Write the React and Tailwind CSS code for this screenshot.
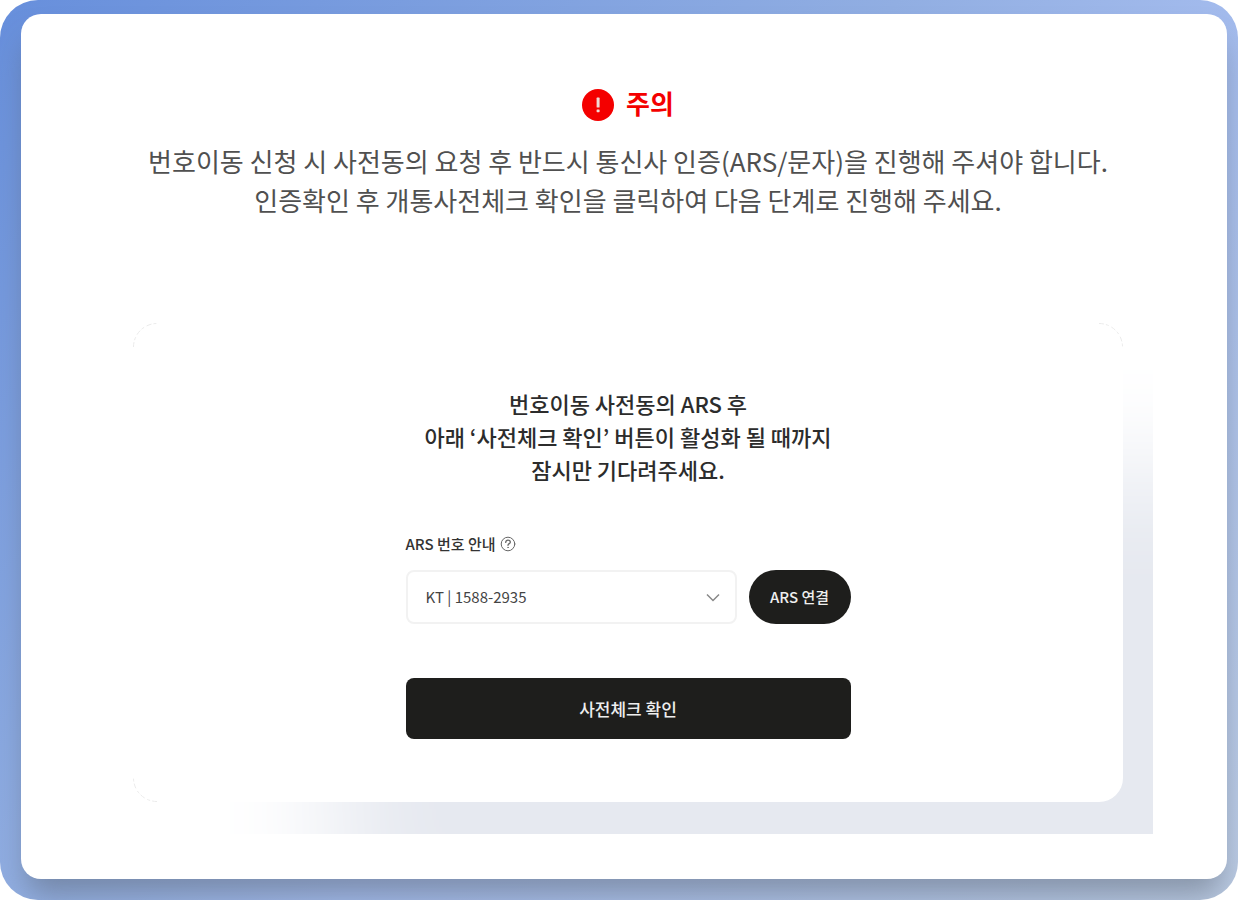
import { useState } from "react";

const ARS_NUMBERS = [
  { value: "kt", label: "KT\u00a0|\u00a01588-2935" },
];

// 패널 모서리에만 보이는 옅은 곡선
const CORNERS = [
  { key: "tl", className: "left-0 top-0" },
  { key: "tr", className: "right-0 top-0 rotate-90" },
  { key: "bl", className: "bottom-0 left-0 -rotate-90" },
];

function CornerArc({ className }) {
  return (
    <svg className={`absolute h-6 w-6 ${className}`} viewBox="0 0 24 24" fill="none" aria-hidden="true">
      <path d="M0.5 24A23.5 23.5 0 0 1 24 0.5" stroke="#ebebeb" strokeDasharray="5 2 3 3" />
    </svg>
  );
}

function AlertIcon() {
  return (
    <svg className="h-8 w-8" viewBox="0 0 32 32" aria-hidden="true">
      <circle cx="16" cy="16" r="16" fill="#f40000" />
      <rect x="14.6" y="8.6" width="3" height="10" rx="0.6" fill="#f0dad6" />
      <rect x="14.6" y="20.4" width="3" height="2.8" rx="0.6" fill="#f0dad6" />
    </svg>
  );
}

function HelpIcon() {
  return (
    <svg className="h-4 w-4" viewBox="0 0 16 16" fill="none" stroke="#666" strokeLinecap="round" aria-hidden="true">
      <circle cx="8" cy="8" r="6.8" />
      <path d="M5.7 6.4C5.7 5 6.7 4.2 8 4.2S10.3 5.1 10.3 6.2C10.3 7.6 8 7.7 8 9.3" strokeWidth="1.3" />
      <circle cx="8" cy="11.4" r="0.4" fill="#666" strokeWidth="0.6" />
    </svg>
  );
}

function ChevronIcon({ className }) {
  return (
    <svg className={className} viewBox="0 0 16 16" fill="none" stroke="#888" strokeWidth="1.5" aria-hidden="true">
      <path d="M2 4.5L8 10.5L14 4.5" />
    </svg>
  );
}

function Notice() {
  return (
    <header className="pr-[30px] text-center">
      <h1 className="flex h-10 items-center justify-center gap-3 text-[26px] leading-8 font-bold text-[#f40000]">
        <AlertIcon />
        <span className="pb-1">주의</span>
      </h1>
      <p className="mt-4 text-[26px] leading-[39px] text-[#505050]">
        번호이동 신청 시 사전동의 요청 후 반드시 통신사 인증(ARS/문자)을 진행해 주셔야 합니다.
        <br />
        인증확인 후 개통사전체크 확인을 클릭하여 다음 단계로 진행해 주세요.
      </p>
    </header>
  );
}

function ArsForm() {
  const [number, setNumber] = useState("kt");

  return (
    <form className="mx-auto w-full max-w-[445px]" onSubmit={(e) => e.preventDefault()}>
      <div className="flex items-center gap-1 text-[#333]">
        <label htmlFor="ars" className="text-[15px] leading-6 font-medium">ARS 번호 안내</label>
        <HelpIcon />
      </div>
      <div className="mt-[14px] flex gap-3">
        <div className="relative flex-1">
          <select
            id="ars"
            value={number}
            onChange={(e) => setNumber(e.target.value)}
            className="h-[54px] w-full appearance-none rounded-lg border-2 border-[#f2f2f2] bg-white px-[18px] text-[15px] text-[#444]"
          >
            {ARS_NUMBERS.map((n) => (
              <option key={n.value} value={n.value}>{n.label}</option>
            ))}
          </select>
          <ChevronIcon className="pointer-events-none absolute top-5 right-4 h-4 w-4" />
        </div>
        <button type="button" className="h-[54px] w-[102px] rounded-full bg-[#1e1e1c] text-[15px] font-medium text-[#eee]">
          ARS 연결
        </button>
      </div>
      <button type="submit" className="mt-[54px] h-[61px] w-full rounded-lg bg-[#1e1e1c] text-[17px] font-medium text-[#eee]">
        사전체크 확인
      </button>
    </form>
  );
}

export default function App() {
  return (
    <div className="min-h-screen bg-white font-['Noto_Sans_CJK_KR',sans-serif]">
      <div className="flex min-h-screen overflow-hidden rounded-[38px] bg-[linear-gradient(135deg,#678fdc_0%,#91aee2_42%,#a3bbed_58%,#bccce4_100%)] pt-[14px] pr-[11px] pb-[21px] pl-[21px]">
        <main className="flex-1 rounded-[20px] bg-white px-[74px] pt-[71px] pb-[45px] shadow-[0_22px_30px_-6px_rgba(85,95,110,0.5)] lg:pl-[112px]">
          <Notice />
          <div className="mt-[104px] overflow-hidden pr-[30px] pb-8">
            <section className="relative rounded-3xl bg-white pt-16 pb-[63px] shadow-[200px_150px_120px_#e6e9f0]">
              {CORNERS.map((c) => (
                <CornerArc key={c.key} className={c.className} />
              ))}
              <h2 className="text-center text-[22px] leading-[33px] font-medium text-[#2c2c2c]">
                번호이동 사전동의 ARS 후
                <br />
                아래 ‘사전체크 확인’ 버튼이 활성화 될 때까지
                <br />
                잠시만 기다려주세요.
              </h2>
              <div className="mt-[46px]">
                <ArsForm />
              </div>
            </section>
          </div>
        </main>
      </div>
    </div>
  );
}
